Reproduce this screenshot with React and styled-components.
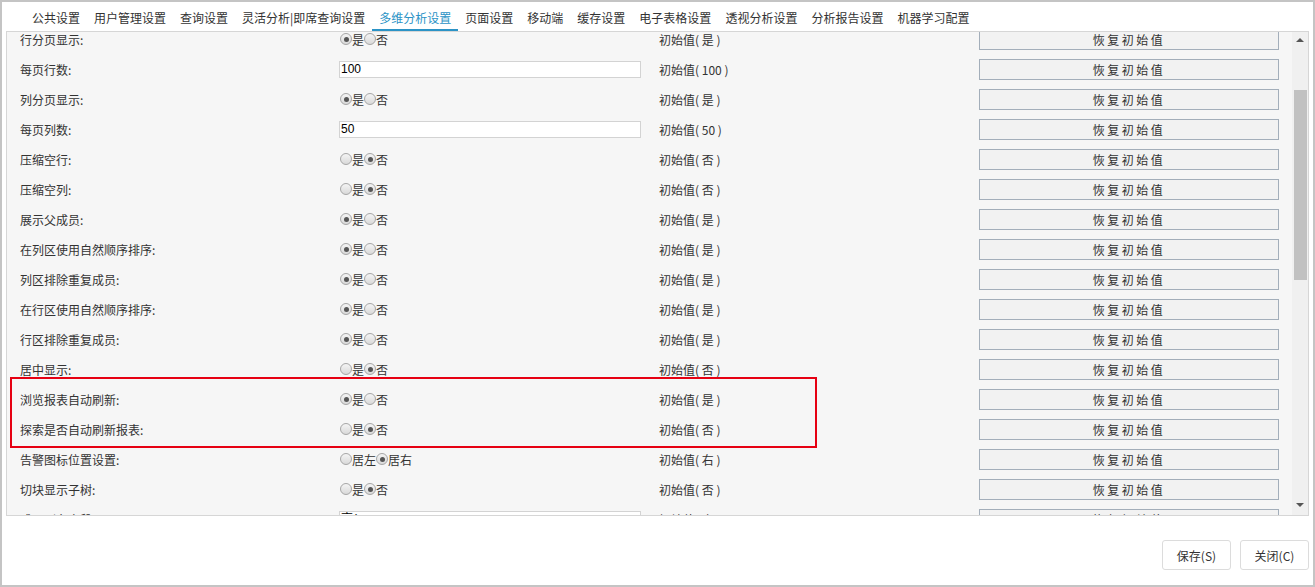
import React from "react";
import styled, { createGlobalStyle } from "styled-components";

const tabs = [
  "公共设置",
  "用户管理设置",
  "查询设置",
  "灵活分析|即席查询设置",
  "多维分析设置",
  "页面设置",
  "移动端",
  "缓存设置",
  "电子表格设置",
  "透视分析设置",
  "分析报告设置",
  "机器学习配置",
];

const rows = [
  { label: "行分页显示:", type: "radio", value: 0, init: "是" },
  { label: "每页行数:", type: "input", value: "100", init: "100" },
  { label: "列分页显示:", type: "radio", value: 0, init: "是" },
  { label: "每页列数:", type: "input", value: "50", init: "50" },
  { label: "压缩空行:", type: "radio", value: 1, init: "否" },
  { label: "压缩空列:", type: "radio", value: 1, init: "否" },
  { label: "展示父成员:", type: "radio", value: 0, init: "是" },
  { label: "在列区使用自然顺序排序:", type: "radio", value: 0, init: "是" },
  { label: "列区排除重复成员:", type: "radio", value: 0, init: "是" },
  { label: "在行区使用自然顺序排序:", type: "radio", value: 0, init: "是" },
  { label: "行区排除重复成员:", type: "radio", value: 0, init: "是" },
  { label: "居中显示:", type: "radio", value: 1, init: "否" },
  { label: "浏览报表自动刷新:", type: "radio", value: 0, init: "是", mark: true },
  { label: "探索是否自动刷新报表:", type: "radio", value: 1, init: "否", mark: true },
  { label: "告警图标位置设置:", type: "radio", value: 1, init: "右", options: ["居左", "居右"] },
  { label: "切块显示子树:", type: "radio", value: 1, init: "否" },
  { label: "成员别名字段显示:", type: "input", value: "高(", init: "高" },
];

const GlobalStyle = createGlobalStyle`
  html, body {
    margin: 0;
    padding: 0;
    background: #fff;
  }
  body {
    font-family: "Microsoft YaHei", "Noto Sans CJK SC", "Noto Sans", sans-serif;
    font-size: 12px;
    color: #333;
  }
`;

const Dialog = styled.div`
  width: 1315px;
  height: 587px;
  box-sizing: border-box;
  border: 2px solid #c4c4c4;
  background: #fff;
  display: flex;
  flex-direction: column;
`;

const TabBar = styled.div`
  display: flex;
  height: 29px;
  padding-left: 23px;
`;

const Tab = styled.div`
  padding: 0 7px;
  display: flex;
  align-items: center;
  padding-top: 4px;
  box-sizing: border-box;
  border-bottom: 2px solid ${(p) => (p.active ? "#2b93c6" : "transparent")};
  color: ${(p) => (p.active ? "#2b93c6" : "#333")};
  white-space: nowrap;
`;

const Panel = styled.div`
  margin: 0 4px;
  height: 485px;
  box-sizing: border-box;
  border: 1px solid #d6d6d6;
  background: #f6f6f6;
  display: flex;
  overflow: hidden;
`;

/* the list is scrolled a few pixels down in the reference */
const List = styled.div`
  flex: 1;
  margin-top: -8px;
`;

const Row = styled.div`
  display: grid;
  grid-template-columns: 319px 320px 320px 300px;
  height: 30px;
  align-items: center;
  padding-left: 13px;
`;

const Label = styled.div`
  color: #333;
  white-space: nowrap;
`;

const Choices = styled.div`
  display: flex;
  align-items: center;
  padding-left: 1px;
`;

const Radio = styled.span`
  width: 10px;
  height: 10px;
  border-radius: 50%;
  border: 1px solid #a6a6a6;
  background: linear-gradient(#f4f4f4, #d9d9d9);
  display: inline-flex;
  align-items: center;
  justify-content: center;

  &::after {
    content: "";
    width: 5px;
    height: 5px;
    border-radius: 50%;
    background: ${(p) => (p.checked ? "#555" : "transparent")};
  }
`;

const TextInput = styled.div`
  width: 302px;
  height: 17px;
  box-sizing: border-box;
  border: 1px solid #d3d3d3;
  background: #fff;
  font-family: "Liberation Sans", "Noto Sans CJK SC", sans-serif;
  font-size: 12px;
  color: #000;
  line-height: 15px;
  padding-left: 1px;
`;

const InitValue = styled.div`
  white-space: pre;
  color: #333;
`;

const ResetButton = styled.button`
  width: 300px;
  height: 21px;
  box-sizing: border-box;
  border: 1px solid #a3aeba;
  background: #f2f2f2;
  font-family: inherit;
  font-size: 12px;
  color: #333;
  letter-spacing: 2.5px;
  padding: 0;
`;

const Highlight = styled.div`
  position: relative;

  &::after {
    content: "";
    position: absolute;
    left: 3px;
    top: -7px;
    width: 807px;
    height: 71px;
    box-sizing: border-box;
    border: 2px solid #e60012;
    pointer-events: none;
  }
`;

const ScrollBar = styled.div`
  width: 16px;
  background: #f0f0f0;
  display: flex;
  flex-direction: column;
  align-items: center;
`;

const Arrow = styled.div`
  width: 0;
  height: 0;
  border-left: 4px solid transparent;
  border-right: 4px solid transparent;
  ${(p) =>
    p.down
      ? "border-top: 4px solid #555; margin-bottom: 8px;"
      : "border-bottom: 4px solid #555; margin-top: 6px;"}
`;

const Thumb = styled.div`
  width: 13px;
  height: 190px;
  background: #c1c1c1;
  margin-top: 48px;
`;

const Spacer = styled.div`
  flex: 1;
`;

const Footer = styled.div`
  flex: 1;
  display: flex;
  justify-content: flex-end;
  align-items: flex-end;
  gap: 9px;
  padding: 0 4px 15px 0;
`;

const FooterButton = styled.button`
  width: 69px;
  height: 30px;
  border: 1px solid #dcdcdc;
  border-radius: 3px;
  background: #fff;
  font-family: inherit;
  font-size: 12px;
  color: #333;
  padding: 0;
`;

const SettingRow = ({ row }) => {
  const options = row.options || ["是", "否"];
  return (
    <Row>
      <Label>{row.label}</Label>
      {row.type === "radio" ? (
        <Choices>
          {options.map((o, i) => (
            <React.Fragment key={o}>
              <Radio checked={row.value === i} />
              <span>{o}</span>
            </React.Fragment>
          ))}
        </Choices>
      ) : (
        <TextInput>{row.value}</TextInput>
      )}
      <InitValue>{`初始值( ${row.init} )`}</InitValue>
      <ResetButton>恢复初始值</ResetButton>
    </Row>
  );
};

export default function App() {
  const marked = rows.filter((r) => r.mark);
  return (
    <>
      <GlobalStyle />
      <Dialog>
        <TabBar>
          {tabs.map((t) => (
            <Tab key={t} active={t === "多维分析设置"}>
              {t}
            </Tab>
          ))}
        </TabBar>
        <Panel>
          <List>
            {rows.slice(0, 12).map((r) => (
              <SettingRow key={r.label} row={r} />
            ))}
            <Highlight>
              {marked.map((r) => (
                <SettingRow key={r.label} row={r} />
              ))}
            </Highlight>
            {rows.slice(14).map((r) => (
              <SettingRow key={r.label} row={r} />
            ))}
          </List>
          <ScrollBar>
            <Arrow />
            <Thumb />
            <Spacer />
            <Arrow down />
          </ScrollBar>
        </Panel>
        <Footer>
          <FooterButton>保存(S)</FooterButton>
          <FooterButton>关闭(C)</FooterButton>
        </Footer>
      </Dialog>
    </>
  );
}
